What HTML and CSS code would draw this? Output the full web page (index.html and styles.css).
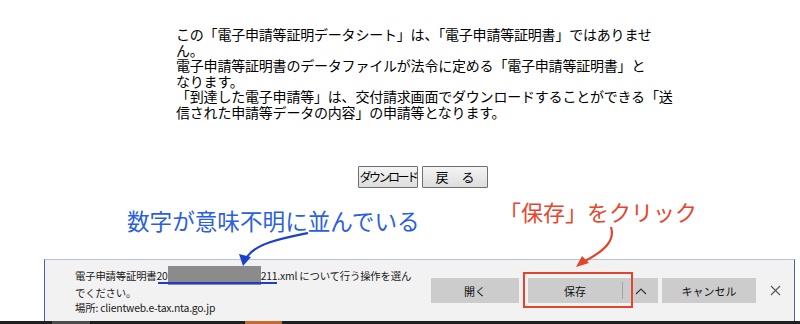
FILE: index.html
```html
<!DOCTYPE html>
<html>
    <head>
        <title>電子申請等証明データシート</title>
        <link rel="stylesheet" href="styles.css">
    </head>
    <body>
        <div class="page">
            <div class="sheet">
                <p class="notice">この「電子申請等証明データシート」は、「電子申請等証明書」ではありませ<br>ん。<br>電子申請等証明書のデータファイルが法令に定める「電子申請等証明書」と<br>なります。<br>「到達した電子申請等」は、交付請求画面でダウンロードすることができる「送<br>信された申請等データの内容」の申請等となります。</p>
                <div class="actions">
                    <button class="btn btn-dl">ダウンロード</button>
                    <button class="btn btn-back">戻　る</button>
                </div>
            </div>
            <div class="download-bar">
                <div class="bar-msg">電子申請等証明書20<span class="redact"></span>211.xml について行う操作を選ん<br>でください。<br>場所: clientweb.e-tax.nta.go.jp</div>
                <div class="bar-actions">
                    <button class="bar-btn btn-open">開く</button>
                    <div class="split">
                        <button class="bar-btn btn-save">保存</button>
                        <span class="split-sep"></span>
                        <button class="bar-btn btn-more">
                            <svg width="12" height="8" viewBox="0 0 12 8"><polyline points="1,7 6,2 11,7" fill="none" stroke="#333" stroke-width="1.1"/></svg>
                        </button>
                    </div>
                    <button class="bar-btn btn-cancel">キャンセル</button>
                    <button class="bar-close">
                        <svg width="11" height="11" viewBox="0 0 11 11"><path d="M1 1L10 10M10 1L1 10" stroke="#555" stroke-width="1.1"/></svg>
                    </button>
                </div>
            </div>
            <div class="taskbar">
                <span class="task task-a"></span>
                <span class="task task-b"></span>
            </div>
            <!-- hand-drawn annotations on top of the screenshot -->
            <div class="notes">
                <svg class="note-lines" width="800" height="324" viewBox="0 0 800 324">
                    <path d="M308 233 C284 238 256 243 247 257" fill="none" stroke="#1d3fcc" stroke-width="2.2"/>
                    <polygon points="243,266 239,254 251,257" fill="#1d3fcc"/>
                    <line x1="158" y1="283" x2="277" y2="283" stroke="#1d3fcc" stroke-width="2"/>
                    <path d="M611 227 C615 240 606 250 585 261" fill="none" stroke="#e2452b" stroke-width="2.2"/>
                    <polygon points="576,267 582,256 589,263" fill="#e2452b"/>
                    <rect x="524" y="273" width="108" height="34" fill="none" stroke="#e2452b" stroke-width="2"/>
                </svg>
                <span class="note note-blue">数字が意味不明に並んでいる</span>
                <span class="note note-red">「保存」をクリック</span>
            </div>
        </div>
    </body>
</html>
```

FILE: styles.css
```css
html,
body {
    margin: 0;
    padding: 0;
    overflow: hidden;
}

body {
    background-color: #ffffff;
    font-family: "Noto Sans CJK JP", "Noto Sans", sans-serif;
    color: #000000;
}

.page {
    position: relative;
    width: 800px;
    height: 324px;
}

.sheet {
    box-sizing: border-box;
    height: 259px;
    padding-top: 27px;
    padding-left: 176px;
}

.notice {
    margin: 0;
    font-size: 14px;
    line-height: 15.6px;
    letter-spacing: -0.2px;
    white-space: nowrap;
}

.actions {
    display: flex;
    gap: 4px;
    margin-top: 45px;
    padding-left: 182px;
}

.btn {
    height: 22px;
    padding: 0;
    border: 1px solid #6f6f6f;
    border-radius: 1px;
    background: linear-gradient(#f4f4f4, #dddddd);
    font-family: inherit;
    font-size: 12px;
    line-height: 18px;
    color: #000000;
    white-space: nowrap;
    overflow: hidden;
}

.btn-dl {
    width: 60px;
    letter-spacing: -2.5px;
}

.btn-back {
    width: 66px;
    font-size: 13px;
}

.download-bar {
    box-sizing: border-box;
    display: flex;
    align-items: center;
    width: 751px;
    height: 62px;
    margin-left: 44px;
    padding-left: 30px;
    border-top: 1px solid #b7c3d6;
    border-left: 1px solid #4066a9;
    border-right: 1px solid #4066a9;
    background-color: #f2f2f2;
}

.bar-msg {
    flex: 0 0 356px;
    font-size: 10.4px;
    line-height: 15px;
    letter-spacing: -0.2px;
    color: #1a1a1a;
    white-space: nowrap;
}

.redact {
    display: inline-block;
    width: 93px;
    height: 19px;
    vertical-align: -5px;
    background-color: #8b8b8b;
}

.bar-actions {
    display: flex;
    align-items: center;
}

.bar-btn {
    height: 25px;
    padding: 0;
    border: none;
    background-color: #cccccc;
    font-family: inherit;
    font-size: 11px;
    color: #111111;
}

.btn-open {
    width: 88px;
}

.split {
    display: flex;
    align-items: center;
    margin-left: 9px;
    background-color: #cccccc;
}

.btn-save {
    width: 94px;
}

.split-sep {
    width: 1px;
    height: 17px;
    background-color: #a5a5a5;
}

.btn-more {
    display: flex;
    align-items: center;
    justify-content: center;
    width: 35px;
}

.btn-cancel {
    width: 94px;
    margin-left: 4px;
}

.bar-close {
    display: flex;
    padding: 0;
    margin-left: 14px;
    border: none;
    background: none;
}

.taskbar {
    display: flex;
    height: 3px;
    background-color: #1f1f1f;
}

.task {
    height: 3px;
}

.task-a {
    width: 38px;
    margin-left: 52px;
    background-color: #4c4c4c;
}

.task-b {
    width: 37px;
    margin-left: 155px;
    background-color: #c9692f;
}

.notes {
    position: absolute;
    top: 0;
    left: 0;
    width: 800px;
    height: 324px;
    pointer-events: none;
}

.note-lines {
    position: absolute;
    top: 0;
    left: 0;
}

.note {
    position: absolute;
    line-height: 22px;
    white-space: nowrap;
}

.note-blue {
    top: 210px;
    left: 127px;
    font-size: 22.6px;
    color: #2c5fe0;
}

.note-red {
    top: 200px;
    left: 499px;
    font-size: 22px;
    color: #e8462c;
}
```
